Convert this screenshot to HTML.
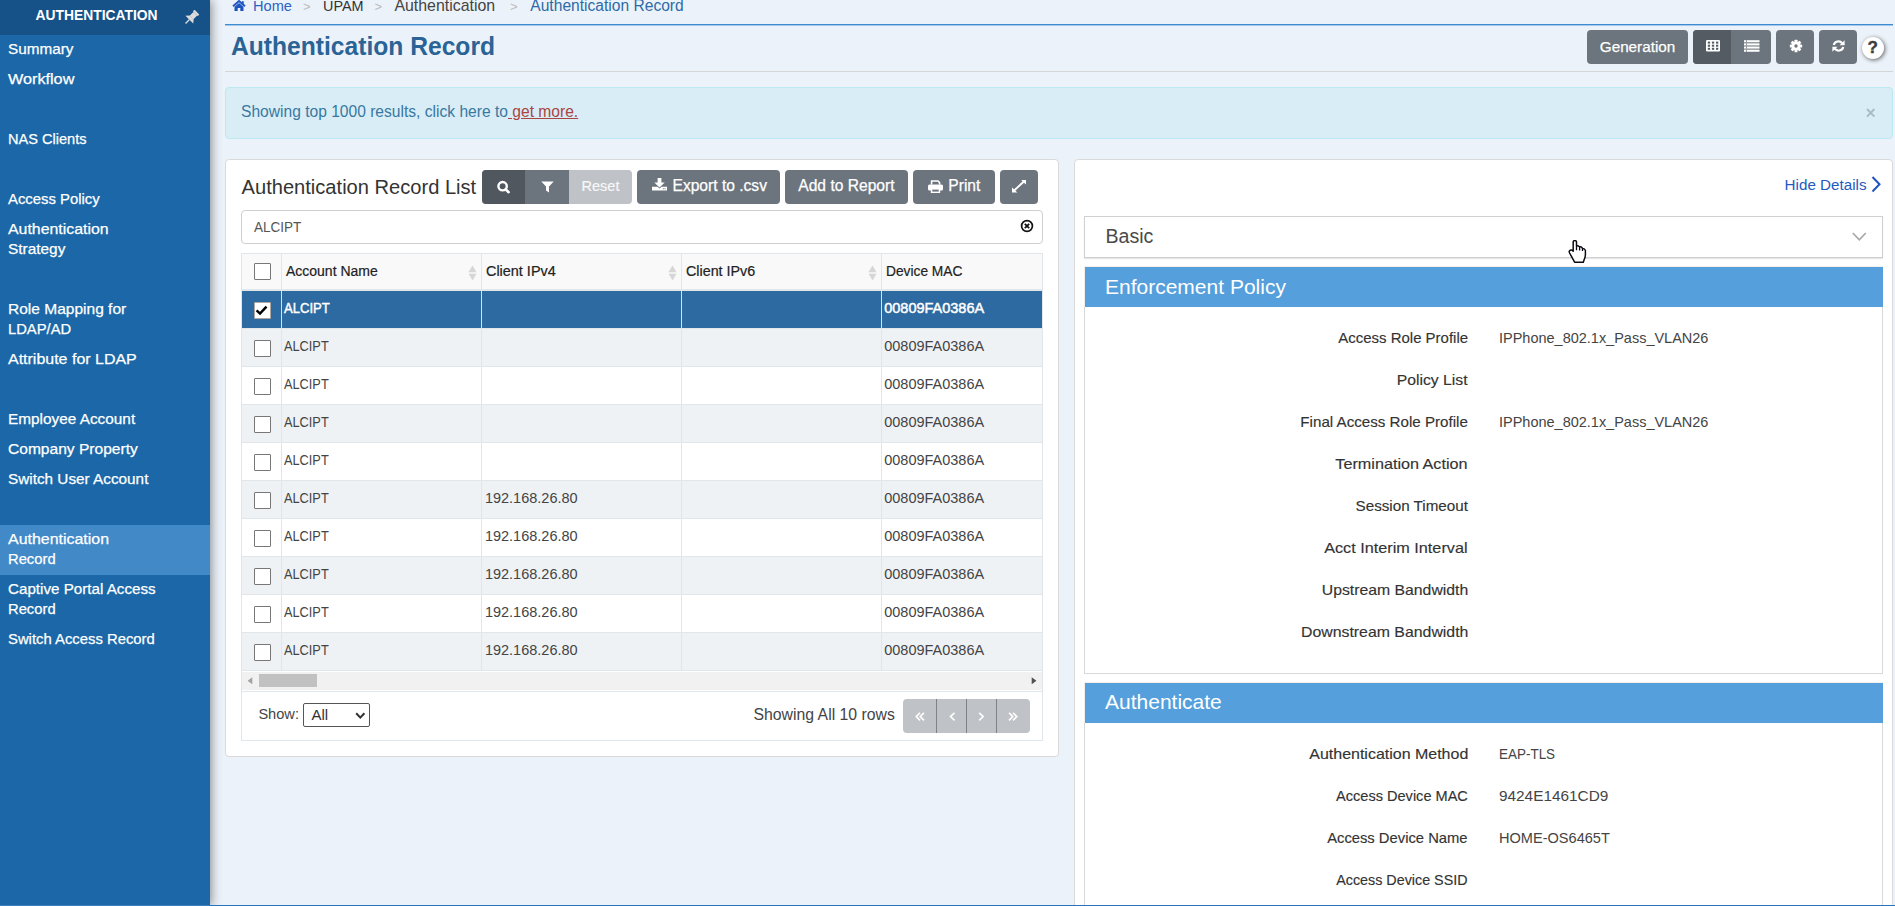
<!DOCTYPE html><html><head><meta charset="utf-8"><style>
html,body{margin:0;padding:0}
body{width:1895px;height:906px;overflow:hidden;position:relative;background:#ecf2f9;font-family:"Liberation Sans",sans-serif}
.t{position:absolute;line-height:1;white-space:nowrap}
.r{position:absolute;box-sizing:border-box}
svg{position:absolute}
</style></head><body>
<div class="r" style="left:0px;top:0px;width:210px;height:906px;background:#1b67a7;box-shadow:1px 0 10px rgba(0,0,0,.45)"></div>
<div class="r" style="left:0px;top:0px;width:210px;height:35px;background:#165287"></div>
<div class="r" style="left:0px;top:525px;width:210px;height:50px;background:#4289c8"></div>
<div class="t" style="left:35.5px;top:9.3px;font-size:13.85px;color:#fff;font-weight:bold;">AUTHENTICATION</div>
<div class="t" style="left:8.0px;top:41.1px;font-size:15.2px;color:#fff;font-weight:normal;-webkit-text-stroke:0.25px #fff;transform:scaleX(1.006);transform-origin:0 0">Summary</div>
<div class="t" style="left:8.0px;top:71.1px;font-size:15.2px;color:#fff;font-weight:normal;-webkit-text-stroke:0.25px #fff;transform:scaleX(1.067);transform-origin:0 0">Workflow</div>
<div class="t" style="left:8.0px;top:131.1px;font-size:15.2px;color:#fff;font-weight:normal;-webkit-text-stroke:0.25px #fff;transform:scaleX(0.959);transform-origin:0 0">NAS Clients</div>
<div class="t" style="left:8.0px;top:191.1px;font-size:15.2px;color:#fff;font-weight:normal;-webkit-text-stroke:0.25px #fff;transform:scaleX(0.979);transform-origin:0 0">Access Policy</div>
<div class="t" style="left:8.0px;top:221.1px;font-size:15.2px;color:#fff;font-weight:normal;-webkit-text-stroke:0.25px #fff;transform:scaleX(1.046);transform-origin:0 0">Authentication</div>
<div class="t" style="left:8.0px;top:241.1px;font-size:15.2px;color:#fff;font-weight:normal;-webkit-text-stroke:0.25px #fff;transform:scaleX(1.014);transform-origin:0 0">Strategy</div>
<div class="t" style="left:8.0px;top:301.1px;font-size:15.2px;color:#fff;font-weight:normal;-webkit-text-stroke:0.25px #fff;transform:scaleX(1.022);transform-origin:0 0">Role Mapping for</div>
<div class="t" style="left:8.0px;top:321.1px;font-size:15.2px;color:#fff;font-weight:normal;-webkit-text-stroke:0.25px #fff;transform:scaleX(0.972);transform-origin:0 0">LDAP/AD</div>
<div class="t" style="left:8.0px;top:351.1px;font-size:15.2px;color:#fff;font-weight:normal;-webkit-text-stroke:0.25px #fff;transform:scaleX(1.052);transform-origin:0 0">Attribute for LDAP</div>
<div class="t" style="left:8.0px;top:411.1px;font-size:15.2px;color:#fff;font-weight:normal;-webkit-text-stroke:0.25px #fff;transform:scaleX(1.011);transform-origin:0 0">Employee Account</div>
<div class="t" style="left:8.0px;top:441.1px;font-size:15.2px;color:#fff;font-weight:normal;-webkit-text-stroke:0.25px #fff;transform:scaleX(1.025);transform-origin:0 0">Company Property</div>
<div class="t" style="left:8.0px;top:471.1px;font-size:15.2px;color:#fff;font-weight:normal;-webkit-text-stroke:0.25px #fff;transform:scaleX(1.008);transform-origin:0 0">Switch User Account</div>
<div class="t" style="left:8.0px;top:531.1px;font-size:15.2px;color:#fff;font-weight:normal;-webkit-text-stroke:0.25px #fff;transform:scaleX(1.050);transform-origin:0 0">Authentication</div>
<div class="t" style="left:8.0px;top:551.1px;font-size:15.2px;color:#fff;font-weight:normal;-webkit-text-stroke:0.25px #fff;transform:scaleX(0.972);transform-origin:0 0">Record</div>
<div class="t" style="left:8.0px;top:581.1px;font-size:15.2px;color:#fff;font-weight:normal;-webkit-text-stroke:0.25px #fff;transform:scaleX(0.999);transform-origin:0 0">Captive Portal Access</div>
<div class="t" style="left:8.0px;top:601.1px;font-size:15.2px;color:#fff;font-weight:normal;-webkit-text-stroke:0.25px #fff;transform:scaleX(0.972);transform-origin:0 0">Record</div>
<div class="t" style="left:8.0px;top:631.1px;font-size:15.2px;color:#fff;font-weight:normal;-webkit-text-stroke:0.25px #fff;transform:scaleX(0.977);transform-origin:0 0">Switch Access Record</div>
<div class="r" style="left:225px;top:24px;width:1668px;height:1px;background:#3d8bd0"></div>
<div class="r" style="left:225px;top:25px;width:1668px;height:1px;background:#a5c9ea"></div>
<div class="r" style="left:225px;top:71px;width:1668px;height:1px;background:#d6d6d6"></div>
<div class="t" style="left:253.0px;top:-1.4px;font-size:14.6px;color:#2b63c4;font-weight:normal;">Home</div>
<div class="t" style="left:303.0px;top:-0.0px;font-size:13px;color:#bbb;font-weight:normal;">&gt;</div>
<div class="t" style="left:323.0px;top:-1.2px;font-size:14.4px;color:#333;font-weight:normal;">UPAM</div>
<div class="t" style="left:374.6px;top:-0.0px;font-size:13px;color:#bbb;font-weight:normal;">&gt;</div>
<div class="t" style="left:394.4px;top:-2.5px;font-size:15.9px;color:#444;font-weight:normal;">Authentication</div>
<div class="t" style="left:510.0px;top:-0.0px;font-size:13px;color:#bbb;font-weight:normal;">&gt;</div>
<div class="t" style="left:530.3px;top:-2.2px;font-size:15.6px;color:#2d6ba7;font-weight:normal;">Authentication Record</div>
<div class="t" style="left:230.5px;top:33.2px;font-size:26px;color:#2a6496;font-weight:bold;transform:scaleX(0.947);transform-origin:0 0">Authentication Record</div>
<div class="r" style="left:1587px;top:30px;width:101px;height:34px;background:#6c757d;border-radius:4px"></div>
<div class="t" style="left:1599.8px;top:39.1px;font-size:15.25px;color:#fff;font-weight:normal;-webkit-text-stroke:0.25px #fff">Generation</div>
<div class="r" style="left:1693px;top:30px;width:78px;height:34px;background:#6c757d;border-radius:4px"></div>
<div class="r" style="left:1693px;top:30px;width:38px;height:34px;background:#545b62;border-radius:4px 0 0 4px"></div>
<div class="r" style="left:1776px;top:30px;width:38px;height:34px;background:#6c757d;border-radius:4px"></div>
<div class="r" style="left:1819px;top:30px;width:38px;height:34px;background:#6c757d;border-radius:4px"></div>
<div class="r" style="left:1862px;top:36.5px;width:22px;height:22.0px;background:#fff;border-radius:50%;box-shadow:1px 1px 4px rgba(0,0,0,.6)"></div>
<div class="t" style="left:1867.5px;top:39.1px;font-size:17px;color:#3c3c3c;font-weight:bold;-webkit-text-stroke:0.4px #3c3c3c">?</div>
<div class="r" style="left:225px;top:87px;width:1668px;height:52px;background:#d9edf7;border:1px solid #bce8f1;border-radius:4px"></div>
<div class="t" style="left:241.0px;top:103.8px;font-size:15.6px;color:#3878a0;font-weight:normal;">Showing top 1000 results, click here to<span style="color:#a94442;text-decoration:underline"> get more.</span></div>
<div class="r" style="left:225px;top:159px;width:834px;height:598px;background:#fff;border:1px solid #dadada;border-radius:4px"></div>
<div class="t" style="left:241.6px;top:177.0px;font-size:20.1px;color:#333;font-weight:normal;">Authentication Record List</div>
<div class="r" style="left:482px;top:170px;width:150px;height:34px;background:#bfc2c6;border-radius:4px;overflow:hidden"></div>
<div class="r" style="left:482px;top:170px;width:43px;height:34px;background:#50575e;border-radius:4px 0 0 4px"></div>
<div class="r" style="left:525px;top:170px;width:44px;height:34px;background:#6c747d"></div>
<div class="r" style="left:637px;top:170px;width:143px;height:34px;background:#6c747d;border-radius:4px"></div>
<div class="r" style="left:785px;top:170px;width:123px;height:34px;background:#6c747d;border-radius:4px"></div>
<div class="r" style="left:913px;top:170px;width:82px;height:34px;background:#6c747d;border-radius:4px"></div>
<div class="r" style="left:1000px;top:170px;width:38px;height:34px;background:#6c747d;border-radius:4px"></div>
<div class="t" style="left:581.5px;top:178.7px;font-size:14.55px;color:#f8f8f8;font-weight:normal;-webkit-text-stroke:0.2px #f8f8f8">Reset</div>
<div class="t" style="left:672.5px;top:177.8px;font-size:15.6px;color:#fff;font-weight:normal;-webkit-text-stroke:0.25px #fff">Export to .csv</div>
<div class="t" style="left:798.3px;top:177.8px;font-size:15.6px;color:#fff;font-weight:normal;-webkit-text-stroke:0.25px #fff">Add to Report</div>
<div class="t" style="left:948.3px;top:177.8px;font-size:15.6px;color:#fff;font-weight:normal;-webkit-text-stroke:0.25px #fff">Print</div>
<div class="r" style="left:241px;top:210px;width:802px;height:34px;background:#fff;border:1px solid #cfcfcf;border-radius:4px"></div>
<div class="t" style="left:254.4px;top:218.6px;font-size:15px;color:#555;font-weight:normal;transform:scaleX(0.9);transform-origin:0 0">ALCIPT</div>
<div class="r" style="left:241px;top:253px;width:802px;height:38px;background:#f9f9f9;border:1px solid #e1e6eb;border-bottom:none"></div>
<div class="r" style="left:241px;top:290px;width:802px;height:38px;background:#2d6aa1;border-top:1px solid #e1e6eb"></div>
<div class="r" style="left:241px;top:328px;width:802px;height:38px;background:#eff2f5;border-top:1px solid #e1e6eb"></div>
<div class="r" style="left:241px;top:366px;width:802px;height:38px;background:#fff;border-top:1px solid #e1e6eb"></div>
<div class="r" style="left:241px;top:404px;width:802px;height:38px;background:#eff2f5;border-top:1px solid #e1e6eb"></div>
<div class="r" style="left:241px;top:442px;width:802px;height:38px;background:#fff;border-top:1px solid #e1e6eb"></div>
<div class="r" style="left:241px;top:480px;width:802px;height:38px;background:#eff2f5;border-top:1px solid #e1e6eb"></div>
<div class="r" style="left:241px;top:518px;width:802px;height:38px;background:#fff;border-top:1px solid #e1e6eb"></div>
<div class="r" style="left:241px;top:556px;width:802px;height:38px;background:#eff2f5;border-top:1px solid #e1e6eb"></div>
<div class="r" style="left:241px;top:594px;width:802px;height:38px;background:#fff;border-top:1px solid #e1e6eb"></div>
<div class="r" style="left:241px;top:632px;width:802px;height:38px;background:#eff2f5;border-top:1px solid #e1e6eb"></div>
<div class="r" style="left:241px;top:289px;width:802px;height:2px;background:#e1e6eb"></div>
<div class="r" style="left:241px;top:670px;width:802px;height:1px;background:#e1e6eb"></div>
<div class="r" style="left:281px;top:253px;width:1px;height:417px;background:#e1e6eb"></div>
<div class="r" style="left:481px;top:253px;width:1px;height:417px;background:#e1e6eb"></div>
<div class="r" style="left:681px;top:253px;width:1px;height:417px;background:#e1e6eb"></div>
<div class="r" style="left:881px;top:253px;width:1px;height:417px;background:#e1e6eb"></div>
<div class="r" style="left:281px;top:291px;width:1px;height:37px;background:#d8e2ec"></div>
<div class="r" style="left:481px;top:291px;width:1px;height:37px;background:#d8e2ec"></div>
<div class="r" style="left:681px;top:291px;width:1px;height:37px;background:#d8e2ec"></div>
<div class="r" style="left:881px;top:291px;width:1px;height:37px;background:#d8e2ec"></div>
<div class="r" style="left:241px;top:253px;width:1px;height:488px;background:#e1e6eb"></div>
<div class="r" style="left:1042px;top:253px;width:1px;height:488px;background:#e1e6eb"></div>
<div class="t" style="left:286.2px;top:263.5px;font-size:14px;color:#222;font-weight:normal;-webkit-text-stroke:0.2px #222;transform:scaleX(0.999);transform-origin:0 0">Account Name</div>
<div class="t" style="left:486.3px;top:263.5px;font-size:14px;color:#222;font-weight:normal;-webkit-text-stroke:0.2px #222;transform:scaleX(1.030);transform-origin:0 0">Client IPv4</div>
<div class="t" style="left:686.4px;top:263.5px;font-size:14px;color:#222;font-weight:normal;-webkit-text-stroke:0.2px #222;transform:scaleX(1.022);transform-origin:0 0">Client IPv6</div>
<div class="t" style="left:886.0px;top:263.5px;font-size:14px;color:#222;font-weight:normal;-webkit-text-stroke:0.2px #222;transform:scaleX(0.982);transform-origin:0 0">Device MAC</div>
<div class="r" style="left:254px;top:263px;width:17px;height:17px;background:#fff;border:1px solid #777;border-radius:1px"></div>
<div class="t" style="left:284.0px;top:301.0px;font-size:14.5px;color:#fff;font-weight:normal;-webkit-text-stroke:0.45px #fff;transform:scaleX(0.9);transform-origin:0 0">ALCIPT</div>
<div class="t" style="left:884.2px;top:301.0px;font-size:14.5px;color:#fff;font-weight:normal;-webkit-text-stroke:0.45px #fff">00809FA0386A</div>
<div class="r" style="left:254px;top:302px;width:17px;height:17px;background:#fff;border:1px solid #b0a8a0;border-radius:1px"></div>
<div class="t" style="left:284.0px;top:339.0px;font-size:14.5px;color:#444;font-weight:normal;transform:scaleX(0.88);transform-origin:0 0">ALCIPT</div>
<div class="t" style="left:884.2px;top:339.0px;font-size:14.5px;color:#444;font-weight:normal;">00809FA0386A</div>
<div class="r" style="left:254px;top:340px;width:17px;height:17px;background:#fff;border:1px solid #777;border-radius:1px"></div>
<div class="t" style="left:284.0px;top:377.0px;font-size:14.5px;color:#444;font-weight:normal;transform:scaleX(0.88);transform-origin:0 0">ALCIPT</div>
<div class="t" style="left:884.2px;top:377.0px;font-size:14.5px;color:#444;font-weight:normal;">00809FA0386A</div>
<div class="r" style="left:254px;top:378px;width:17px;height:17px;background:#fff;border:1px solid #777;border-radius:1px"></div>
<div class="t" style="left:284.0px;top:415.0px;font-size:14.5px;color:#444;font-weight:normal;transform:scaleX(0.88);transform-origin:0 0">ALCIPT</div>
<div class="t" style="left:884.2px;top:415.0px;font-size:14.5px;color:#444;font-weight:normal;">00809FA0386A</div>
<div class="r" style="left:254px;top:416px;width:17px;height:17px;background:#fff;border:1px solid #777;border-radius:1px"></div>
<div class="t" style="left:284.0px;top:453.0px;font-size:14.5px;color:#444;font-weight:normal;transform:scaleX(0.88);transform-origin:0 0">ALCIPT</div>
<div class="t" style="left:884.2px;top:453.0px;font-size:14.5px;color:#444;font-weight:normal;">00809FA0386A</div>
<div class="r" style="left:254px;top:454px;width:17px;height:17px;background:#fff;border:1px solid #777;border-radius:1px"></div>
<div class="t" style="left:284.0px;top:491.0px;font-size:14.5px;color:#444;font-weight:normal;transform:scaleX(0.88);transform-origin:0 0">ALCIPT</div>
<div class="t" style="left:884.2px;top:491.0px;font-size:14.5px;color:#444;font-weight:normal;">00809FA0386A</div>
<div class="t" style="left:484.9px;top:491.0px;font-size:14.5px;color:#444;font-weight:normal;">192.168.26.80</div>
<div class="r" style="left:254px;top:492px;width:17px;height:17px;background:#fff;border:1px solid #777;border-radius:1px"></div>
<div class="t" style="left:284.0px;top:529.0px;font-size:14.5px;color:#444;font-weight:normal;transform:scaleX(0.88);transform-origin:0 0">ALCIPT</div>
<div class="t" style="left:884.2px;top:529.0px;font-size:14.5px;color:#444;font-weight:normal;">00809FA0386A</div>
<div class="t" style="left:484.9px;top:529.0px;font-size:14.5px;color:#444;font-weight:normal;">192.168.26.80</div>
<div class="r" style="left:254px;top:530px;width:17px;height:17px;background:#fff;border:1px solid #777;border-radius:1px"></div>
<div class="t" style="left:284.0px;top:567.0px;font-size:14.5px;color:#444;font-weight:normal;transform:scaleX(0.88);transform-origin:0 0">ALCIPT</div>
<div class="t" style="left:884.2px;top:567.0px;font-size:14.5px;color:#444;font-weight:normal;">00809FA0386A</div>
<div class="t" style="left:484.9px;top:567.0px;font-size:14.5px;color:#444;font-weight:normal;">192.168.26.80</div>
<div class="r" style="left:254px;top:568px;width:17px;height:17px;background:#fff;border:1px solid #777;border-radius:1px"></div>
<div class="t" style="left:284.0px;top:605.0px;font-size:14.5px;color:#444;font-weight:normal;transform:scaleX(0.88);transform-origin:0 0">ALCIPT</div>
<div class="t" style="left:884.2px;top:605.0px;font-size:14.5px;color:#444;font-weight:normal;">00809FA0386A</div>
<div class="t" style="left:484.9px;top:605.0px;font-size:14.5px;color:#444;font-weight:normal;">192.168.26.80</div>
<div class="r" style="left:254px;top:606px;width:17px;height:17px;background:#fff;border:1px solid #777;border-radius:1px"></div>
<div class="t" style="left:284.0px;top:643.0px;font-size:14.5px;color:#444;font-weight:normal;transform:scaleX(0.88);transform-origin:0 0">ALCIPT</div>
<div class="t" style="left:884.2px;top:643.0px;font-size:14.5px;color:#444;font-weight:normal;">00809FA0386A</div>
<div class="t" style="left:484.9px;top:643.0px;font-size:14.5px;color:#444;font-weight:normal;">192.168.26.80</div>
<div class="r" style="left:254px;top:644px;width:17px;height:17px;background:#fff;border:1px solid #777;border-radius:1px"></div>
<div class="r" style="left:242px;top:672px;width:800px;height:18px;background:#f1f1f1"></div>
<div class="r" style="left:259px;top:674px;width:58px;height:13px;background:#c1c1c1"></div>
<div class="r" style="left:241px;top:691px;width:802px;height:50px;background:#fff;border:1px solid #e1e6eb"></div>
<div class="t" style="left:258.4px;top:706.9px;font-size:14.6px;color:#444;font-weight:normal;">Show:</div>
<div class="r" style="left:303px;top:703px;width:67px;height:24px;background:#fff;border:1px solid #555;border-radius:2px"></div>
<div class="t" style="left:311.5px;top:706.6px;font-size:15px;color:#333;font-weight:normal;">All</div>
<div class="t" style="left:753.5px;top:706.8px;font-size:15.8px;color:#444;font-weight:normal;">Showing All 10 rows</div>
<div class="r" style="left:903px;top:699px;width:127px;height:34px;background:#bfc2c6;border-radius:4px"></div>
<div class="r" style="left:936px;top:699px;width:1px;height:34px;background:#7d8287"></div>
<div class="r" style="left:966px;top:699px;width:1px;height:34px;background:#7d8287"></div>
<div class="r" style="left:996px;top:699px;width:1px;height:34px;background:#7d8287"></div>
<div class="r" style="left:1074px;top:159px;width:819px;height:761px;background:#fff;border:1px solid #dadada;border-radius:4px"></div>
<div class="t" style="left:1784.6px;top:177.1px;font-size:15.2px;color:#2559bf;font-weight:normal;">Hide Details</div>
<div class="r" style="left:1084px;top:216px;width:799px;height:42px;background:#fff;border:1px solid #d0d0d0;box-shadow:0 1px 1px rgba(0,0,0,.1)"></div>
<div class="t" style="left:1105.5px;top:226.7px;font-size:19.6px;color:#4a4a4a;font-weight:normal;">Basic</div>
<div class="r" style="left:1084px;top:266px;width:799px;height:41px;background:#549fdc;border-top:1px solid #f3eee8;border-left:1px solid #f3eee8"></div>
<div class="t" style="left:1105.0px;top:275.6px;font-size:21px;color:#fff;font-weight:normal;">Enforcement Policy</div>
<div class="r" style="left:1084px;top:307px;width:799px;height:367px;background:#fff;border:1px solid #d9d9d9;border-top:none"></div>
<div class="t" style="right:427.0px;top:330.3px;font-size:15px;color:#333;font-weight:normal;-webkit-text-stroke:0.15px #333;transform:scaleX(0.998);transform-origin:100% 0">Access Role Profile</div>
<div class="t" style="left:1499.0px;top:330.5px;font-size:14.5px;color:#444;font-weight:normal;;transform:scaleX(0.999);transform-origin:0 0">IPPhone_802.1x_Pass_VLAN26</div>
<div class="t" style="right:427.0px;top:372.3px;font-size:15px;color:#333;font-weight:normal;-webkit-text-stroke:0.15px #333;transform:scaleX(1.049);transform-origin:100% 0">Policy List</div>
<div class="t" style="right:427.0px;top:414.3px;font-size:15px;color:#333;font-weight:normal;-webkit-text-stroke:0.15px #333;transform:scaleX(1.010);transform-origin:100% 0">Final Access Role Profile</div>
<div class="t" style="left:1499.0px;top:414.5px;font-size:14.5px;color:#444;font-weight:normal;;transform:scaleX(0.999);transform-origin:0 0">IPPhone_802.1x_Pass_VLAN26</div>
<div class="t" style="right:427.0px;top:456.3px;font-size:15px;color:#333;font-weight:normal;-webkit-text-stroke:0.15px #333;transform:scaleX(1.079);transform-origin:100% 0">Termination Action</div>
<div class="t" style="right:427.0px;top:498.3px;font-size:15px;color:#333;font-weight:normal;-webkit-text-stroke:0.15px #333;transform:scaleX(1.013);transform-origin:100% 0">Session Timeout</div>
<div class="t" style="right:427.0px;top:540.3px;font-size:15px;color:#333;font-weight:normal;-webkit-text-stroke:0.15px #333;transform:scaleX(1.082);transform-origin:100% 0">Acct Interim Interval</div>
<div class="t" style="right:427.0px;top:582.3px;font-size:15px;color:#333;font-weight:normal;-webkit-text-stroke:0.15px #333;transform:scaleX(1.052);transform-origin:100% 0">Upstream Bandwidth</div>
<div class="t" style="right:427.0px;top:624.3px;font-size:15px;color:#333;font-weight:normal;-webkit-text-stroke:0.15px #333;transform:scaleX(1.057);transform-origin:100% 0">Downstream Bandwidth</div>
<div class="r" style="left:1084px;top:682px;width:799px;height:41px;background:#549fdc;border-top:1px solid #f3eee8;border-left:1px solid #f3eee8"></div>
<div class="t" style="left:1105.0px;top:690.8px;font-size:21px;color:#fff;font-weight:normal;">Authenticate</div>
<div class="r" style="left:1084px;top:723px;width:799px;height:197px;background:#fff;border:1px solid #d9d9d9;border-top:none"></div>
<div class="t" style="right:427.0px;top:745.8px;font-size:15px;color:#333;font-weight:normal;-webkit-text-stroke:0.15px #333;transform:scaleX(1.065);transform-origin:100% 0">Authentication Method</div>
<div class="t" style="left:1499.0px;top:746.7px;font-size:14.5px;color:#444;font-weight:normal;;transform:scaleX(0.928);transform-origin:0 0">EAP-TLS</div>
<div class="t" style="right:427.0px;top:787.8px;font-size:15px;color:#333;font-weight:normal;-webkit-text-stroke:0.15px #333;transform:scaleX(0.970);transform-origin:100% 0">Access Device MAC</div>
<div class="t" style="left:1499.0px;top:788.7px;font-size:14.5px;color:#444;font-weight:normal;;transform:scaleX(1.059);transform-origin:0 0">9424E1461CD9</div>
<div class="t" style="right:427.0px;top:829.8px;font-size:15px;color:#333;font-weight:normal;-webkit-text-stroke:0.15px #333;transform:scaleX(0.985);transform-origin:100% 0">Access Device Name</div>
<div class="t" style="left:1499.0px;top:830.7px;font-size:14.5px;color:#444;font-weight:normal;;transform:scaleX(1.004);transform-origin:0 0">HOME-OS6465T</div>
<div class="t" style="right:427.0px;top:871.8px;font-size:15px;color:#333;font-weight:normal;-webkit-text-stroke:0.15px #333;transform:scaleX(0.955);transform-origin:100% 0">Access Device SSID</div>
<svg style="left:183px;top:7.8px;" width="18" height="18" viewBox="0 0 18 18"><g transform="translate(-0.6 0.6) rotate(45 9 9) translate(9 9) scale(0.92) translate(-9 -9)" fill="#dcdcdc"><rect x="5.2" y="0.5" width="7.6" height="2.6" rx="1"/><rect x="6.2" y="3" width="5.6" height="6"/><path d="M3 12.2 L5.8 8.8 H12.2 L15 12.2 Z"/><rect x="8.3" y="12" width="1.4" height="6"/></g></svg>
<svg style="left:232px;top:0px;" width="14" height="12" viewBox="0 0 14 12"><g fill="#1f55c0"><path d="M1 6.2 L7 1 L13 6.2" fill="none" stroke="#1f55c0" stroke-width="1.9"/><rect x="9.8" y="1.2" width="1.9" height="3.5"/><path d="M2.5 6.8 L7 3 L11.5 6.8 V11 H8.3 V8 H5.7 V11 H2.5 Z"/></g></svg>
<svg style="left:1706px;top:39.5px;" width="14" height="12" viewBox="0 0 14 12"><rect x="0" y="0" width="14" height="11.5" rx="1.2" fill="#fff"/><rect x="1.8" y="1.6" width="2.3" height="2" fill="#525a63"/><rect x="5.9" y="1.6" width="2.3" height="2" fill="#525a63"/><rect x="10.0" y="1.6" width="2.3" height="2" fill="#525a63"/><rect x="1.8" y="4.7" width="2.3" height="2" fill="#525a63"/><rect x="5.9" y="4.7" width="2.3" height="2" fill="#525a63"/><rect x="10.0" y="4.7" width="2.3" height="2" fill="#525a63"/><rect x="1.8" y="7.8" width="2.3" height="2" fill="#525a63"/><rect x="5.9" y="7.8" width="2.3" height="2" fill="#525a63"/><rect x="10.0" y="7.8" width="2.3" height="2" fill="#525a63"/></svg>
<svg style="left:1743.5px;top:39.5px;" width="16" height="12" viewBox="0 0 16 12"><rect x="0" y="0.20" width="15.5" height="2.1" fill="#fff"/><rect x="2.3" y="0.20" width="0.7" height="2.1" fill="#6c757d"/><rect x="0" y="3.35" width="15.5" height="2.1" fill="#fff"/><rect x="2.3" y="3.35" width="0.7" height="2.1" fill="#6c757d"/><rect x="0" y="6.50" width="15.5" height="2.1" fill="#fff"/><rect x="2.3" y="6.50" width="0.7" height="2.1" fill="#6c757d"/><rect x="0" y="9.65" width="15.5" height="2.1" fill="#fff"/><rect x="2.3" y="9.65" width="0.7" height="2.1" fill="#6c757d"/></svg>
<svg style="left:1788.5px;top:39px;" width="14" height="14" viewBox="0 0 14 14"><g transform="translate(7 7) scale(0.88) translate(-7 -7)"><g fill="#fff"><rect x="5.3" y="0" width="3.4" height="3.5" rx="0.6" transform="rotate(0 7 7)"/><rect x="5.3" y="0" width="3.4" height="3.5" rx="0.6" transform="rotate(45 7 7)"/><rect x="5.3" y="0" width="3.4" height="3.5" rx="0.6" transform="rotate(90 7 7)"/><rect x="5.3" y="0" width="3.4" height="3.5" rx="0.6" transform="rotate(135 7 7)"/><rect x="5.3" y="0" width="3.4" height="3.5" rx="0.6" transform="rotate(180 7 7)"/><rect x="5.3" y="0" width="3.4" height="3.5" rx="0.6" transform="rotate(225 7 7)"/><rect x="5.3" y="0" width="3.4" height="3.5" rx="0.6" transform="rotate(270 7 7)"/><rect x="5.3" y="0" width="3.4" height="3.5" rx="0.6" transform="rotate(315 7 7)"/><circle cx="7" cy="7" r="5"/></g><circle cx="7" cy="7" r="1.9" fill="#6c757d"/></g></svg>
<svg style="left:1831px;top:39px;" width="15" height="14" viewBox="0 0 15 14"><g transform="translate(7.5 7) scale(0.9) translate(-7.5 -7)"><g fill="none" stroke="#fff" stroke-width="2.4"><path d="M2.2 6 A5.3 5.3 0 0 1 11.6 4"/><path d="M12.8 8 A5.3 5.3 0 0 1 3.4 10"/></g><g fill="#fff"><path d="M14.3 0.5 V6.2 H8.6 Z"/><path d="M0.7 13.5 V7.8 H6.4 Z"/></g></g></svg>
<svg style="left:496px;top:180px;" width="16" height="14" viewBox="0 0 16 14"><circle cx="6.6" cy="6.2" r="4.2" fill="none" stroke="#fff" stroke-width="2.4"/><path d="M9.6 9.3 L12.6 12.2" stroke="#fff" stroke-width="2.6" stroke-linecap="round"/></svg>
<svg style="left:541px;top:180.5px;" width="13" height="12" viewBox="0 0 13 12"><path d="M0.3 0.5 H12.7 L8 5.5 V11.5 L5 9.5 V5.5 Z" fill="#fff"/></svg>
<svg style="left:652px;top:178px;" width="15" height="13" viewBox="0 0 15 13"><g fill="#fff"><rect x="5.6" y="0" width="3.8" height="5"/><path d="M2.3 4.6 H12.7 L7.5 9.4 Z"/><path d="M0 8.8 H5.5 L7.5 10.6 L9.5 8.8 H15 V12.6 H0 Z"/></g><rect x="10.8" y="10.3" width="1" height="1" fill="#6c757d"/><rect x="12.5" y="10.3" width="1" height="1" fill="#6c757d"/></svg>
<svg style="left:927.5px;top:180px;" width="15" height="13" viewBox="0 0 15 13"><path d="M3.6 4.6 V1 H10 L11.6 2.6 V4.6" fill="none" stroke="#fff" stroke-width="1.6"/><rect x="0" y="4.4" width="15" height="6" rx="1.5" fill="#fff"/><rect x="2.8" y="8.6" width="9.4" height="4.4" fill="#fff"/><rect x="4.3" y="9.6" width="6.4" height="2" fill="#6c747d"/></svg>
<svg style="left:1012px;top:180px;" width="14" height="13" viewBox="0 0 14 13"><g fill="#fff"><path d="M14 0 V5.4 L12 3.4 L3.4 12 L5.4 14 H0 V8.6 L2 10.6 L10.6 2 L8.6 0 Z" transform="translate(0,-0.5) scale(1,0.93)"/></g></svg>
<svg style="left:1020px;top:219px;" width="14" height="14" viewBox="0 0 14 14"><circle cx="7" cy="7" r="5.4" fill="none" stroke="#111" stroke-width="1.7"/><path d="M4.8 4.8 L9.2 9.2 M9.2 4.8 L4.8 9.2" stroke="#111" stroke-width="1.8"/></svg>
<svg style="left:467.9px;top:264.5px;" width="9" height="16" viewBox="0 0 9 16"><path d="M0.5 7.2 L4.5 0.5 L8.5 7.2 Z M0.5 8.8 L4.5 15.5 L8.5 8.8 Z" fill="#d6d6d6"/></svg>
<svg style="left:667.9px;top:264.5px;" width="9" height="16" viewBox="0 0 9 16"><path d="M0.5 7.2 L4.5 0.5 L8.5 7.2 Z M0.5 8.8 L4.5 15.5 L8.5 8.8 Z" fill="#d6d6d6"/></svg>
<svg style="left:868.1px;top:264.5px;" width="9" height="16" viewBox="0 0 9 16"><path d="M0.5 7.2 L4.5 0.5 L8.5 7.2 Z M0.5 8.8 L4.5 15.5 L8.5 8.8 Z" fill="#d6d6d6"/></svg>
<svg style="left:255px;top:305px;" width="13" height="11" viewBox="0 0 13 11"><path d="M1.6 5.4 L5 8.6 L11.5 1.6" fill="none" stroke="#000" stroke-width="2.5"/></svg>
<svg style="left:247px;top:677px;" width="6" height="8" viewBox="0 0 6 8"><path d="M5.3 0.3 V7.3 L0.6 3.8 Z" fill="#a3a3a3"/></svg>
<svg style="left:1031px;top:677px;" width="6" height="8" viewBox="0 0 6 8"><path d="M0.7 0.3 V7.3 L5.4 3.8 Z" fill="#505050"/></svg>
<svg style="left:354.5px;top:711.5px;" width="11" height="8" viewBox="0 0 11 8"><path d="M1.2 1.3 L5.3 5.6 L9.4 1.3" fill="none" stroke="#333" stroke-width="2.1"/></svg>
<svg style="left:915px;top:712px;" width="10" height="10" viewBox="0 0 10 10"><path d="M5 0.8 L1.2 4.6 L5 8.4 M9 0.8 L5.2 4.6 L9 8.4" fill="none" stroke="#fff" stroke-width="1.6"/></svg>
<svg style="left:948.5px;top:712px;" width="7" height="10" viewBox="0 0 7 10"><path d="M5.5 0.8 L1.5 4.6 L5.5 8.4" fill="none" stroke="#fff" stroke-width="1.6"/></svg>
<svg style="left:978px;top:712px;" width="7" height="10" viewBox="0 0 7 10"><path d="M1.2 0.8 L5.2 4.6 L1.2 8.4" fill="none" stroke="#fff" stroke-width="1.6"/></svg>
<svg style="left:1008px;top:712px;" width="10" height="10" viewBox="0 0 10 10"><path d="M1 0.8 L4.8 4.6 L1 8.4 M5 0.8 L8.8 4.6 L5 8.4" fill="none" stroke="#fff" stroke-width="1.6"/></svg>
<svg style="left:1871px;top:175.5px;" width="11" height="17" viewBox="0 0 11 17"><path d="M1.5 1 L8.5 8.2 L1.5 15.5" fill="none" stroke="#1f55c0" stroke-width="2"/></svg>
<svg style="left:1852px;top:232px;" width="15" height="10" viewBox="0 0 15 10"><path d="M0.8 1 L7.3 7.8 L13.8 1" fill="none" stroke="#a8a8a8" stroke-width="1.7"/></svg>
<svg style="left:1865px;top:107px;" width="12" height="12" viewBox="0 0 12 12"><path d="M2 2 L9.4 9.6 M9.4 2 L2 9.6" stroke="#a9bbc4" stroke-width="2"/></svg>
<svg style="left:1568.4px;top:239.9px;" width="20" height="25" viewBox="0 0 20 25"><path d="M5.2 11.2 V2 Q5.2 0.6 6.9 0.6 Q8.5 0.6 8.5 2 V5.8 Q10.5 5.2 11.6 6.8 Q13.6 6.4 14.5 8.4 Q16.8 8.3 17.4 10.4 V15 Q17.2 17.6 16.2 19.5 L15.3 22.2 H6.6 L1.6 13 Q0.6 11 2.3 10.2 Q3.8 9.6 5.2 11.2 Z" fill="#fff" stroke="#0a0a14" stroke-width="1.5" stroke-linejoin="round"/><path d="M8.5 6 V10.2 M11.6 7 V10.6 M14.5 8.6 V11" stroke="#0a0a14" stroke-width="1.3"/></svg>
<div class="r" style="left:210px;top:905px;width:1685px;height:1px;background:#2a74bd"></div>
<div class="r" style="left:0px;top:905px;width:210px;height:1px;background:#3c80c2"></div>
</body></html>
